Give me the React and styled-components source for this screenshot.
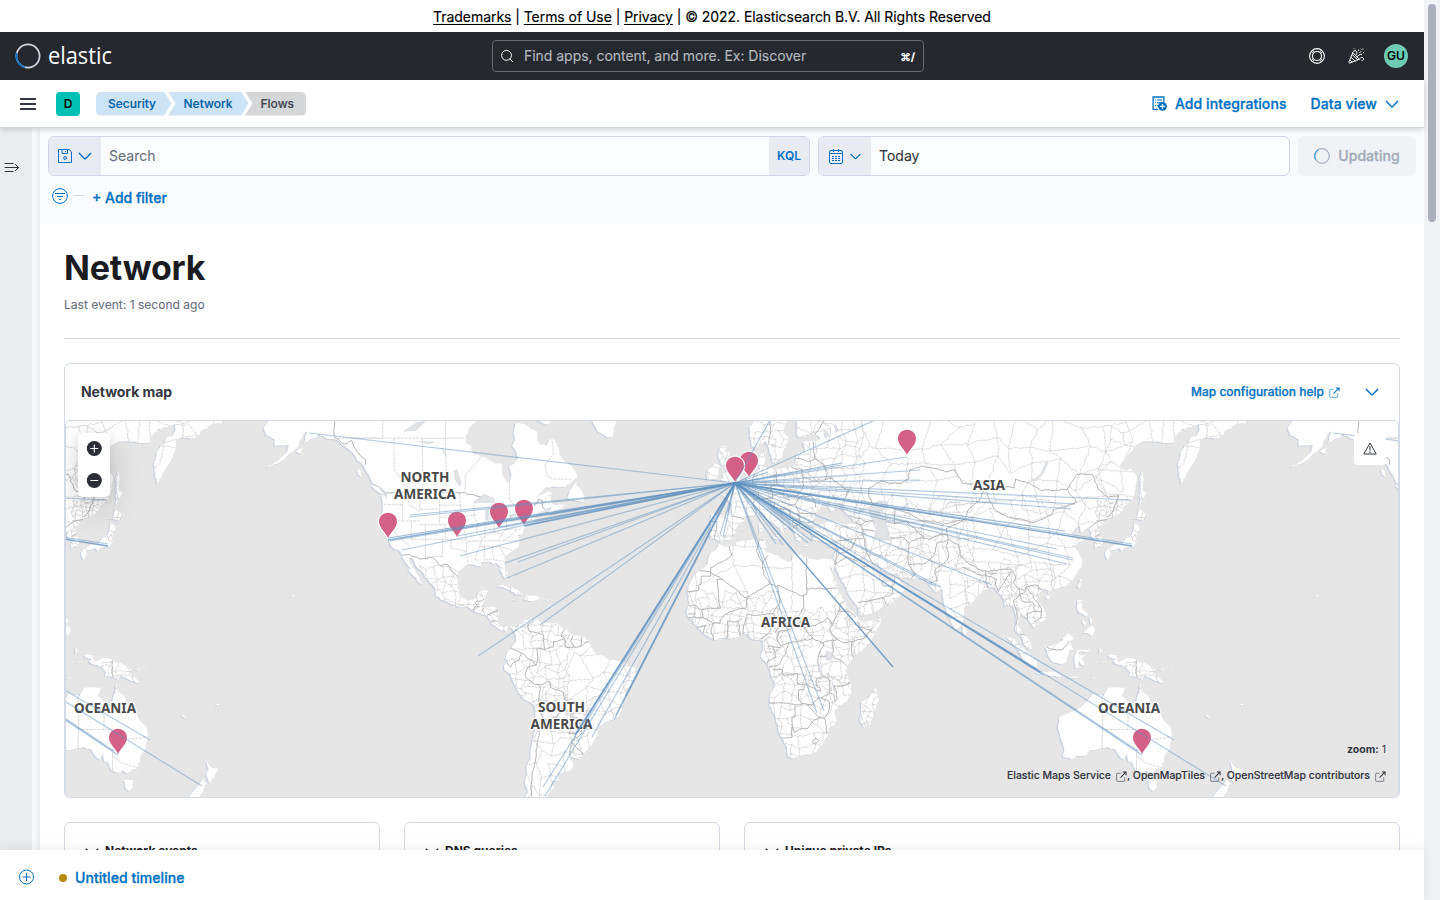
import React from 'react';
import styled, { createGlobalStyle } from 'styled-components';

const Global = createGlobalStyle`
  *, *::before, *::after { box-sizing: border-box; }
  html, body { margin: 0; padding: 0; overflow: hidden; }
  body {
    font-family: Inter, "Liberation Sans", sans-serif;
    font-size: 14px;
    line-height: 20px;
    color: #343741;
    background: #fff;
  }
  a { color: inherit; }
  svg { display: block; flex: none; }
`;

/* ---------- map geometry ---------- */

const WORLD = 1024;
const ORIGIN = { x: 669, y: 232 };
const px = (lon) => ORIGIN.x + (lon * WORLD) / 360;
const py = (lat) =>
  ORIGIN.y - (WORLD / (2 * Math.PI)) * Math.log(Math.tan(Math.PI / 4 + (lat * Math.PI) / 360));

const parse = (s) =>
  s.trim().split(/[\s;]+/).map((p) => {
    const [lon, lat] = p.split(',').map(Number);
    return [px(lon), py(lat)];
  });

const seeded = (seed) => () => {
  seed = (seed * 16807) % 2147483647;
  return seed / 2147483647 - 0.5;
};

/* Breaks long straight runs into short uneven steps, as real coastlines have. */
const rough = (pts, amount, rnd) => {
  const out = [pts[0]];
  for (let i = 1; i < pts.length; i++) {
    const [ax, ay] = pts[i - 1];
    const [bx, by] = pts[i];
    const len = Math.hypot(bx - ax, by - ay);
    const n = Math.min(12, Math.floor(len / 2.6));
    for (let k = 1; k < n; k++) {
      out.push([ax + ((bx - ax) * k) / n + rnd() * amount, ay + ((by - ay) * k) / n + rnd() * amount]);
    }
    out.push(pts[i]);
  }
  return out;
};
const toPath = (pts, close) =>
  'M' + pts.map(([x, y]) => `${x.toFixed(1)} ${y.toFixed(1)}`).join('L') + (close ? 'Z' : '');

const LAND = [
  // North America
  `-161,66 -166,64.5 -164,63 -166,61.7 -165,60.5 -162,59.8 -161.9,58.6 -158.5,58.8 -157,58.8 -157.6,57.5 -160.5,56 -163,55
  -165,54.5 -162.5,55 -160,55.6 -158,56.4 -156,57.4 -154.2,58.2 -153.5,59.2 -151.8,60.8 -150.5,61.2 -151.7,59.2 -149.5,59.8
  -148,60 -146.5,60.8 -144,60 -140,59.7 -137.8,58.7 -136.5,58.2 -134,57 -133,55.8 -131,55 -130.2,54 -128.5,52.5 -127.5,51
  -125,50.3 -123.3,49.2 -122.5,48.5 -122.5,47.2 -123.2,48.2 -124.7,48.4 -124,46.3 -124.1,44 -124.5,42.8 -124.2,41 -123.8,39.5
  -122.5,37.7 -121.8,36.6 -120.6,34.6 -118.5,34 -117.2,32.6 -116.5,31 -115.8,30 -114.2,28.5 -115,27.8 -113.8,26.7 -112.2,25.5
  -112,24.6 -110.2,23 -109.5,23.2 -110.5,24.5 -111.3,26 -112.8,28 -113.8,29.5 -114.7,31.2 -114.7,31.8 -113.2,31.2 -112.2,29
  -110.8,27.8 -109.4,26.6 -109.2,25.7 -107.9,24.7 -106.6,23.3 -105.5,22 -105.4,20.6 -105.2,19.6 -103.5,18.3 -101.9,17.9
  -99.8,16.8 -97.5,15.9 -96,15.7 -94.6,16.2 -93.4,15.5 -92.2,14.5 -90.5,13.9 -88.5,13.2 -87.5,13 -86.5,11.8 -85.7,11
  -85.8,10.1 -84.7,9.6 -83.6,8.8 -82.9,8.2 -81.5,7.7 -80.4,7.3 -80,8 -79.5,9 -78.3,8.3 -77.7,7.2 -76.9,8.2 -77.3,8.8
  -79.5,9.6 -81.5,8.9 -82.8,9.6 -83.7,11 -83.5,12.5 -83.2,14.9 -84.5,15.9 -86.5,15.8 -88.2,15.7 -88.3,17.5 -87.6,19.5
  -86.9,21.4 -88.5,21.5 -90.3,21 -90.8,19.3 -92,18.6 -94.4,18.2 -95.8,18.8 -97.2,20.5 -97.8,22.4 -97.3,25.9 -97.2,27.7
  -95.4,28.9 -94,29.7 -92,29.6 -90.2,29.1 -89.2,29.2 -89.6,30.2 -88,30.4 -86,30.4 -85.2,29.7 -84,30.1 -82.8,29 -82.6,27.6
  -81.8,26.1 -81,25.2 -80.2,25.6 -80.1,27 -81.3,30 -81.2,31.7 -79.2,33.2 -77.9,34 -76,35 -75.8,36.5 -76.4,38.3 -75.3,38.2
  -74.6,39.2 -74,40.5 -72,41.2 -70.2,41.8 -70.8,43 -69,44 -67,44.8 -66,45.2 -64.6,45.5 -66.1,43.8 -65.3,43.6 -63.5,44.6
  -61,45.3 -60.2,46 -61.4,46.2 -64,46.1 -64.9,47 -65,48 -66.5,48.2 -64.3,48.8 -65.5,49.2 -69,48.3 -71,46.9 -69,48.6
  -66.5,50.2 -62,50.2 -60,50.2 -57.5,51.4 -55.8,52.3 -56,53.5 -57.5,54.6 -60,55.5 -61.8,57 -62.5,58.5 -64,60 -65.5,59.8
  -66.3,58.7 -68.5,58.8 -69.7,59.8 -69.6,61 -72,61.6 -74,62.3 -77.5,62.5 -78,60.8 -77.5,60 -78.5,58.6 -77,57.5 -76.5,56.5
  -78,55.2 -79.5,54.7 -78.8,53 -79.3,51.5 -80.5,51.2 -82,53 -82.2,55.1 -85,55.3 -88,56.5 -92,57 -93,58.7 -94.7,59
  -94.8,60.5 -93.5,61.8 -91,63 -88,64.5 -86,66 -86,72 -120,72 -161,70`,
  `-59.2,47.7 -56,47 -53.5,46.7 -53,47.8 -54,49.4 -56,50.6 -55.6,51.5 -57.2,50.6 -58.5,48.8`,
  `-128.3,50.7 -125.3,50.2 -123.5,48.5 -125.2,48.8`, `-133,54 -131.7,53.8 -131.3,52.4 -132.6,53`,
  `-154.5,57.6 -152.2,58.2 -152.8,57.2`, `-73,65 -72,63.4 -66,62.3 -65,62.6 -67,63.6 -66,65`,
  `-84.9,21.9 -83,23 -80.5,23.1 -77.5,21.9 -74.4,20.3 -77.5,19.9 -77.5,20.6 -79.5,21.6 -82,22.6`,
  `-74.4,18.5 -73,19.8 -70,19.7 -68.5,18.6 -71,17.8`, `-78.3,18.3 -76.3,18.1 -77.5,17.8`, `-67.2,18.4 -65.7,18.4 -65.9,18`,
  `-52,66 -51,64 -50,62.5 -48,61 -45,60.1 -43.2,60.2 -42.5,62 -41,64 -38,66`,
  `-156,19.2 -155,19.6 -156,20.1`,
  // South America
  `-77.3,8.6 -76.5,8.8 -75.6,10.6 -74.8,11.1 -73,11.5 -71.4,12.4 -71.9,11.3 -71.5,10 -70.8,11 -70,11.9 -69.5,11.5 -68.2,10.6
  -66,10.5 -64.5,10.2 -62,10.7 -61.9,9.8 -60.8,8.6 -59,8.2 -57.3,6 -55,6 -53,5.5 -51.6,4.3 -50.5,2 -50,0.8 -48.5,-0.6 -47,-0.8
  -44.5,-2.5 -41.5,-2.9 -39.5,-3 -37,-4.8 -35.3,-5.2 -34.8,-7.5 -35.3,-9.5 -37,-11.5 -38.5,-13 -39,-15 -39.2,-17.8 -40,-20
  -41,-22 -43,-23 -45,-23.5 -46.7,-24.3 -48.5,-25.8 -48.6,-28 -50,-30 -52,-32.5 -53.5,-34 -55,-35 -57,-34.5 -58.4,-34
  -57.2,-35.8 -56.8,-37 -58,-38.2 -61,-39 -62.3,-39 -62,-40.8 -64.5,-41 -65,-42 -63.7,-42.5 -65.2,-44 -66.5,-45 -67.5,-46.5
  -66,-50 -74,-50 -75,-46.8 -73,-44 -74,-41.8 -73.4,-39.5 -73.5,-37 -72,-34 -71.5,-30 -70.5,-26 -70.2,-20 -71.3,-17.7
  -75,-15.5 -76.3,-13.8 -77.2,-12 -78.7,-8.5 -79.8,-7 -81.2,-6 -81.3,-4.3 -80.3,-3.4 -80,-2.5 -81,-2.2 -80.5,-0.8 -80,0.6
  -78.8,1.6 -77.2,3.8 -77.4,6 -77.8,7.2`,
  // Africa
  `-5.9,35.8 -2.2,35.2 1,36.4 5,36.8 9.8,37.3 11,36.9 10.4,36 11,34.8 10.1,34 11.2,33.2 13,32.8 15.2,32.3 16,31.3 18.5,30.4
  20,31 20,32.3 21.6,32.9 23.2,32.4 25,31.6 28.5,31 31,31.5 32.3,31.2 32.6,29.9 33.5,28 35.5,24 35.6,22 37.2,20.8 37.4,18.7
  38.6,18 39.6,15.5 41.2,14.5 43,12.5 43.2,11.5 44.8,10.5 47,11.2 51.2,11.9 51,10.4 49,7 47.5,4 45,1.5 42.5,-1 41,-2.2
  39.6,-4.4 38.8,-6.3 39.4,-8 40.5,-10.6 40.7,-14.5 39,-17 36,-19 34.8,-20 35.4,-22.3 35.3,-24 32.8,-25.6 32.6,-28 31,-29.8
  28.5,-32.7 26,-33.8 22.5,-34 20,-34.8 18.4,-34.1 18.2,-31.9 16.5,-28.7 15.1,-26.7 14.4,-22.8 12.8,-19.3 11.8,-17.5
  12.4,-14 13.6,-12.2 13.8,-10.6 13,-9 12.2,-6 11.3,-4 9,-1.4 9.4,0.5 9.7,2.5 9.6,4 8.6,4.6 7,4.4 5.5,5 4.4,6.4 1.5,6.2
  -2,4.8 -4.5,5.2 -7.6,4.4 -9.5,5.6 -11.5,6.9 -13.2,8.6 -14.8,10.9 -16.7,12.4 -17.4,14.7 -16.4,16.3 -16.3,19.5 -17,21
  -16,23.8 -14.8,26 -13,27.7 -11.5,28.4 -9.8,29.8 -9.6,31.4 -8.4,33.3 -6.8,34.2`,
  `49.4,-12.1 50.4,-15.7 49.5,-18 47.5,-24.5 45.2,-25.5 43.6,-23.2 44.3,-20 44,-17 46.5,-15.6 48.2,-13.8`,
  // Eurasia
  `10,64.5 7,63 5,62 5,60.5 5.6,58.8 7.2,58 9,59 10.5,59.5 11.2,58.8 12,57.4 12.8,56 13,55.4 14.3,55.5 15,56.1 16.4,56.3
  16.6,57.6 18,58.9 18.9,59.8 17.3,60.7 17.2,61.8 18,62.8 20,63.6 22,65.8 25,65.2 23,64 21.4,63 21.4,61 22.5,60.1 25,60.2
  28.5,60.5 30,59.9 28,59.5 25,59.5 23.5,59.1 24.3,58.3 24.2,57.3 22.5,57.6 21.2,56.8 21,55.3 19.8,54.5 18.5,54.7 16.5,54.4
  14.2,53.9 12.5,54.4 11,54 10.8,54.4 9.9,55 10.5,56.4 10.5,57.6 8.3,57 8.2,55.5 8.8,54 7,53.5 4.8,53 3.8,51.6 1.8,50.9
  0.2,49.6 -1.6,49.6 -1.5,48.7 -4.6,48.5 -2.6,47.3 -1.2,46 -1.4,43.6 -4,43.4 -8.5,43.7 -9,42 -8.8,40 -9.4,38.8 -8.8,37.1
  -6.7,37 -5.6,36.1 -4,36.7 -2.2,36.8 -0.6,37.8 0.2,38.8 -0.4,39.6 1,41 3.2,42 3.1,43.1 5,43.4 7,43.5 8.8,44.4 10.3,43.6
  11.5,42.3 13.6,41.2 15.6,40 16,38.3 15.8,38 17,38.9 16.7,40.3 18.4,40 18,40.8 16,41.8 14,42.8 13.3,43.8 12.4,44.6
  12.5,45.4 13.7,45.6 14,44.9 15.3,44.2 17.5,42.9 19.4,41.8 19.4,40.4 20.8,38.8 21.4,36.9 22.8,36.5 23.2,37.5 24,37.8
  22.8,39.2 22.8,40.4 24.3,40.3 26,40.9 27.5,41 29,41.2 28,42 27.8,43 28.7,44.2 30,45.8 31.5,46.6 33.5,46.1 32.6,45.4
  33.7,44.4 35.3,45 36.5,45.3 35,46.2 38,47 39.2,47.1 37.7,46.4 37.5,45 39.6,43.5 41.5,42.2 41.3,41.4 38,41 35,42 32.5,41.8
  30.5,41.1 29,41 27.5,40.4 26.2,40.1 26.8,38.8 27.3,37 28.5,36.7 30.5,36.4 32.5,36 34.5,36.7 36.1,36.6 35.8,35 35,33
  34.2,31.3 32.3,31.2 32.6,29.9 34.2,27.8 34.9,29.4 36.5,26 39,22 39.2,21 41,18.5 42.7,16.5 43.3,13 45,12.9 49,14.2
  52.2,15.7 55.2,17.5 57.8,19.5 59.8,22.5 58.5,23.7 56.5,26 56,24.7 54.2,24.2 51.6,24.2 51.4,26 50.7,25 50.1,26.7
  48.5,28.8 48,30 50.1,30.2 51.5,27.8 54.5,26.6 57,27 57.2,25.8 61.5,25.2 66.5,25.2 67.5,24 69,22.3 70.5,20.8 72.6,22
  72.8,19.2 73.5,16 74.8,13 76.2,10 77.5,8.1 79,9.3 79.9,10.4 80.2,13.5 80.2,15.5 82.3,16.6 85,19.5 87,21.2 88.5,21.8
  91,22.4 92.3,20.8 94.3,18.5 94.5,16 96.5,16.5 97.6,16.2 98.5,13 98.7,10 98.3,8 100.3,6.3 101.2,3 103.5,1.3 104.2,1.5
  103.4,4.5 102,6.2 100.5,7.3 99.3,9.3 99.8,11.5 100.2,13.4 101.5,12.7 102.8,11.8 103.6,10.6 105,8.7 106.8,10.4 109.2,11.8
  109.2,13.5 108.5,15.5 106.5,17.8 105.7,19 107,20.8 108.5,21.6 110,21.4 110,20.4 111,21.5 113.8,22.2 116.5,23 118.5,24.6
  119.7,26.3 121.5,28.5 121.9,30.8 120.5,33.5 119.3,35 122.4,37 120.8,37.8 119,37.3 118,38.8 121,40.8 121.4,39 124,40
  125.2,38.8 125,37.8 126.7,37 126.5,34.5 129,35.3 129.4,37 127.5,39.5 129.7,41.2 131,42.7 133,42.8 135.5,44.3 138,46.5
  140.3,48.5 140.6,50.5 141.2,52.5 139,54.2 137.2,53.8 135.2,54.8 138,57 141,58.8 143,59.3 148,59.4 151,59.2 155,59.3
  154.3,60 157,61.6 160,61.8 163,62.5 163.2,61.5 162,60.4 160,60 157,57.8 155.6,55.5 156,52.5 156.7,51 158.5,53 160,54.5
  162,56.2 163.2,58 163.5,59.8 166,60 170,60 173,61.5 177,62.5 179.5,62.5 179.9,65 180,72 60,75 20,72`,
  `-5.6,50.1 -3.5,50.3 -1,50.7 1.3,51.2 1.7,52.7 0.2,53.2 -1.2,54.6 -2,56 -3,56 -1.9,57.5 -4,57.7 -3.1,58.6 -5,58.6 -6,57
  -5.5,56 -4.8,55 -3.2,54.9 -3,53.5 -4.5,53.2 -4.3,52.3 -5.2,51.8 -3,51.4`,
  `-10,51.6 -6.5,52.2 -6,53.8 -5.6,54.6 -7.3,55.3 -8.5,54.4 -10,53.8`,
  `12.5,38 15.5,38.2 15.1,36.7`, `8.3,41 9.6,41 9.5,39.2 8.5,39`, `8.7,42.5 9.4,42.9 9.4,41.5`, `23.6,35.5 26.2,35.2 24.8,35`,
  `32.4,35 34.4,35.6 33.5,34.7`, `2.5,39.7 3.4,39.7 3,39.3`, `79.9,9.5 81.8,7.5 80.5,6 79.8,7.5`,
  `95.3,5.6 97.5,5.2 100.3,2.5 103.5,-0.8 106,-3 105.8,-5.8 102.5,-4 100.3,-1 98.7,1.8`,
  `105.3,-6.7 108.5,-6.7 111,-6.5 114.5,-7.8 114.4,-8.6 110,-8 106.5,-7.4`,
  `109,1.8 111.3,2.5 113.2,3.3 115.2,5.3 116.8,6.9 119,5.2 117.7,4 118.8,1 117.5,0.8 116.2,-3.5 114.5,-4 111.7,-3.3 110,-1.2`,
  `119.5,-0.5 120,0.8 123,1 125,1.5 124,0.4 120.3,0.3 121,-1 123.3,-0.9 121.8,-2 122.8,-4.4 121.5,-4.2 120.9,-2.8 120.3,-5.5 119.5,-5.3 119.2,-3`,
  `116,-8.4 119,-8.5 122.8,-8.3 119,-8.9`, `123.6,-10.2 127,-8.4 125,-9.4`, `128,2.1 128.8,0.8 127.8,-0.6`, `128,-3.2 130.8,-3.2 129,-3.5`,
  `131,-0.8 134,-0.9 135,-3.3 138,-1.7 141,-2.6 145,-4.3 147.8,-6 147.2,-7 150.7,-10.4 147.5,-9.8 144,-7.8 142.8,-9.2 139.5,-8.2
  138.2,-8.3 138.8,-6.8 137,-5 133.5,-3.8 132.8,-2.9 133.9,-2.3 131.5,-1.6`,
  `148.6,-5.8 151,-5.6 152.3,-4.4 151.5,-5.6 150,-6.3`, `154.8,-5.6 155.8,-6.8 155,-6.2`, `164.1,-20.2 167,-22.2 166.2,-22.2`, `177.3,-17.6 178.5,-17.8 178,-18.2`,
  `120.2,18.2 122.1,18.4 121.6,15.5 123.8,13.6 123.8,12.8 120.8,14 120,16`, `124.3,12.5 125.6,11 124.8,10.1`, `122,11.7 123.3,10.6 122.8,9.3 122,10.5`,
  `122.2,7 123.8,8.4 125.5,9.6 126.4,7.6 125.5,5.8 124,6.8`, `117.2,8.4 119.3,10.8 119,10`,
  `120.1,23 121.2,25.2 121.8,25 120.8,22`, `108.7,19.3 110.8,20.1 110,18.4`,
  `130,33.4 131,34.3 133.5,35.5 136,35.8 137,37.3 138.8,37.8 140,39.5 140.2,41.2 141.5,41.3 142,39.6 141,38 140.8,35.8 138.8,34.8
  137,34.7 135.8,33.5 134.8,34.6 132,33.9 131.8,32.4 130.7,31.1 130,32.4`,
  `140,42.6 141.2,43.3 141.8,45.4 143.5,44.2 145.3,43.5 143.3,42 141,42.5`,
  `142,46 142.2,49 142,52 142.8,54.3 143.4,52.5 143.2,49.3 144.5,49 143,46.8`,
  // Oceania
  `113.7,-22.5 114.2,-21.8 117,-20.7 119.5,-20 122.2,-18 124,-16.4 126,-14.2 128,-14.8 129.5,-15 130.8,-12.4 132.6,-12 135.2,-12.2
  137,-12.1 135.8,-14.8 139.2,-17.4 140.9,-17.4 141.6,-14 142.5,-10.8 143.5,-14 145.3,-15 146.2,-18.8 149,-20.5 150.8,-23.4
  153.2,-25.5 153.5,-28.5 152.5,-32 151,-34 150,-37.3 147.5,-38.2 146.3,-39 144.5,-38.2 143.5,-38.8 140.5,-38 139.6,-36
  138,-35.6 137.9,-33 136.5,-35 135.2,-34.5 133.6,-32.3 131,-31.5 128.5,-31.8 126,-32.3 124,-33 123.3,-33.9 120,-34
  118,-35 115.1,-34.3 115.7,-32 114.1,-27.8 113.4,-25.8`,
  `144.8,-40.8 148.3,-40.9 148,-42.8 146.8,-43.6 145.4,-42.5`,
  `172.8,-34.5 174.6,-36.2 175.6,-37.2 178.3,-37.7 177,-39.6 175.5,-41.5 174.8,-41.2 173.8,-39.4 174.8,-38 174.3,-36.4`,
  `172.7,-40.6 174.2,-41.6 172.8,-43.7 170.7,-46 168.8,-46.8 166.6,-46 169.5,-43.6 171.5,-42`,
];

const LAKES = [
  `47,45 49,46.5 51,47 53,46.8 53,45.3 51,44.5 50.3,44.3 52.8,42.5 53,41 53.8,39.5 53.8,37 51.5,36.7 49,37.6 49,39 50,40.5 48.5,42 47.5,43.3`,
  `103.8,51.5 106,51.7 108,53 109.8,55.3 109.3,55.7 107.5,53.2 105,51.9`, `58.5,44.5 60,46.5 61,46.4 59.2,45`,
  `73.8,45.3 75,46.5 79,46.6 75,46.8`, `31.8,0.4 34.2,0.2 33.5,-2.6 31.8,-2.3`, `29.2,-3.5 30.8,-8.6 29.3,-6`, `34,-10 35,-14 34.4,-12`,
  `-92,46.7 -88.4,48.6 -85,47.6 -84.7,46.5 -87.5,46.6 -90,46.7`, `-87.5,45 -86.8,41.8 -87.8,42.5 -87.8,44.5 -85,45.9 -86,44.2 -86.2,42.2`,
  `-84.5,45.9 -81.5,45.9 -80,44.6 -81.7,44.8 -82.5,43 -83.8,43.8`, `-83.3,41.8 -79,42.8 -80,42.1`, `-79.6,43.3 -76.3,44.1 -77,43.3`,
  `-99,53.8 -97.8,53.9 -96.4,51 -97,50.5 -98.5,52`, `-116.5,61.2 -112,62.6 -109.2,62.8 -112.5,61.3`, `-111,59.4 -106,59.3 -108,59`,
  `-103,58.2 -101.6,56.6 -102.3,57`, `31,61.6 33,60.6 31.5,60`, `35,62.5 36.3,61.2 35.3,61`,
  `13,58.9 14,58.6 12.8,58.4`,
];

const BORDERS = [
  `-122.8,49 -114,49 -104,49 -95.2,49 -94.6,48.7 -89.5,48 -88.4,48.3 -84.8,46.8 -82.5,45.3 -82.5,43 -83.1,42 -79,42.8 -79,43.4 -76.5,44.1 -74.8,45 -71.5,45 -70.3,46.2 -69.2,47.4 -67.8,47 -67.8,45.7 -67,44.9`,
  `-141,70 -141,60.3`, `-141,60.3 -137.5,58.9 -135,59.6 -133,57.5 -130,56 -130,55`,
  `-117.1,32.5 -114.7,32.7 -111,31.3 -108.2,31.3 -108.2,31.8 -106.5,31.8 -104.9,30.6 -103.3,29 -102.5,29.8 -101,29.5 -99.5,27.5 -97.2,25.9`,
  `-92.2,14.6 -91.7,16 -90.4,16 -91.4,17.2 -91,17.8 -89.2,17.9 -88.3,18.5`, `-89.3,14.4 -88.3,15.7`, `-87.4,13 -85,14.3 -83.2,15`, `-85.7,11.1 -83.7,10.9`,
  `-51.6,4 -54.5,2.3 -56,1.9 -59.8,2 -60,5 -62.8,4 -64,4 -64,2 -67,1.2 -69.8,1.7 -69.5,-1 -70,-4.3 -73,-5 -74,-7.5 -72.7,-9.5 -70.6,-11 -68.5,-11.1 -65.3,-10 -65,-12 -60.5,-13.8 -60,-16.3 -58.2,-17 -57.8,-20 -58,-22 -55.7,-22.3 -54.5,-24.5 -54.6,-25.6 -53.8,-27 -57.6,-30 -53.5,-33.7`,
  `-69,-17.5 -68.2,-21.5 -67,-23 -68.5,-25 -69.7,-30 -70,-34 -71,-38 -71.8,-42 -71.5,-50`, `-67,-23 -62.8,-22 -61,-19.5 -58.2,-20`,
  `-62.6,-22.2 -58,-25 -58.6,-27.3 -56,-27.3 -54.6,-25.6`, `-57.6,-30 -58.3,-33.9`, `-70.3,-18.3 -69,-17.5 -69,-15 -68.5,-12.5 -69.5,-11`,
  `-70,-4.3 -72,-2.4 -75.2,-0.1 -78.8,1.5`, `-75.2,-0.1 -76,-2.5 -78.3,-3.5 -79,-5 -80.3,-3.5`, `-71.4,11.8 -73,9.2 -72.3,7.4 -70,7 -67.5,6.2 -67.3,2.5 -67,1.2`,
  `-60,5 -61.3,6 -60,8.3`, `-57.3,5.9 -58,4 -56.5,1.9`, `-54,5.7 -54.5,2.3`,
  `-2.2,35 -1.3,32.5 -3.5,31 -8.7,28.7 -8.7,27.3 -12.9,27.7`, `-8.7,27.3 -8.7,26 -12,26 -12,23.4 -13,23 -13,21.3 -17,21`,
  `-8.7,27.3 -4.8,25 1.2,21.1 3.2,19 4.2,19.2 12,23.5`, `-4.8,25 -6.5,25 -5.5,16.5 -5.3,15.5 -9.5,15.4 -12,14.8`,
  `12,23.5 9.9,26.5 9.5,30.2 11.5,32.4`, `9.5,30.2 7.5,33.5 8.4,36.8`, `12,23.5 14.2,22.6 15,23 24,19.5 24,20 25,20 25,31.5`, `25,22 36.9,22`,
  `24,19.5 24,15.7 22,12.7 22.9,11`, `15,23 15.5,17 13.5,14.3`, `4.2,19.2 4,16.5 3.5,15.3 0.3,15 -3,13.7 -5.3,11.5 -5.5,10.4 -8,10.2 -8.5,7.5 -7.6,4.5`,
  `3.6,11.7 4.1,13.5 7,13 10,13.3 13.5,13.7 14.2,12.5 15.3,10 14,7`, `14.2,12.5 13.2,10 11.5,6.6 8.8,4.8`, `2.7,6.4 2.8,9 3.6,11.7`, `1.6,6.2 0.9,10.9`,
  `-3,5.1 -2.7,9.5 -2.8,11 1,11 2.4,12`, `-16.4,16.2 -14.5,16.6 -12,14.8 -11.4,12.4 -16.7,12.4`, `-16.6,13.6 -13.9,13.5`, `-13.2,9 -10.5,9.5 -11.4,6.9`, `-11.4,12.4 -8.5,11 -8,10.2`,
  `15.3,7.5 18.5,8 22.9,11 24,8.7 27.4,5 22.5,4.1 18.6,3.5 16,2.3 14.5,5 15.3,7.5`, `24,8.7 28,9.4 32.5,12 34,9.6 33,7.8 35.9,4.7`,
  `34,9.6 36.2,14.2 37,17 38.6,18`, `36.4,14.4 40,14.5 42.4,12.5`, `43,11 44,9 47,8 48,8 45,5 42,4.1`, `35.9,4.7 38,3.6 41,3.9 42,4.1`, `41,3.9 41,-0.8 41.6,-1.7`,
  `34,4.2 34.5,1 34,-1 29.6,-1.3`, `30.8,3.5 35.9,4.7`, `34,-1 37.6,-3.1 39.2,-4.7`, `13,-5.9 16.6,-6 17,-8 21.8,-7.3 21.9,-11 24,-11 24,-13 22,-13 22,-16.2 23.3,-17.6 25.3,-17.8`,
  `18.6,3.5 17.8,0 16.2,-2.5 15,-4.5 13,-4.6 12,-5`, `27.4,5 30.8,3.5 31,2.3 29.7,0.5 29,-2.8 29.4,-6 30.7,-8.3 28.6,-9 28.6,-11.8 29.8,-12.2 29.8,-13.4 27.5,-12.2 25.3,-11.3 24,-11`,
  `25.3,-17.8 27,-18 29,-15.7 30.4,-15.6 33.2,-14 33,-9.5 30.7,-8.3`, `11.8,-17.3 14,-17.4 18.5,-17.4 21.4,-18 24,-17.5`, `21,-18.3 21,-22 20,-22 20,-28.4 17.4,-28.7 16.5,-28.6`,
  `20,-24.8 20.8,-26.9 22.5,-26 25.5,-25.6 27,-23.7 29.4,-22.2 27.7,-20.5 25.3,-17.8`, `29.4,-22.2 31.3,-22.4 32.8,-20 33,-17 30.4,-15.6`, `31.3,-22.4 32,-25 32,-27 32.8,-27`,
  `27,-29.7 28.3,-28.7 29.4,-29.5 28,-30.6 27,-29.7`, `34.6,-11.5 37.5,-11.7 40.4,-10.5`, `33.2,-14 34.5,-14.5 35,-17 35.8,-16 35.5,-13.5 34.6,-11.5`, `11.3,2.2 13.2,2.2 14.4,-1.5 11.5,-2.8 11,-4`, `13.2,2.2 16,1.8`,
  `-8.8,42 -6.5,41.8 -7,39 -7.3,37.2`, `-1.6,43.3 3.1,42.4`, `2.5,51 6,49.5 8.2,49 7.5,47.6 6,46.3 7,45 7.5,43.8`, `7,53.3 6,51.8 6,50 `, `7.5,47.6 9.6,47.5 13,47.6 13,48.5 12.2,50.3 14.8,50.9 14.2,53.8`,
  `14.8,50.9 18.8,49.6 22.6,49.1 24,50.7 23.6,52.6 23.5,54 19.8,54.4`, `13,48.5 17,48.8 17,47.9 22,48.3 22.6,49.1`, `10.5,46.8 13.7,46.5 13.6,45.6`, `16.1,46.8 18.8,45.9 21,46.2 22.8,47.9`,
  `22.8,44 28.6,43.8`, `21,46.2 22.5,44.2 22.5,42 26,41.5 28,42`, `22.9,48 26.7,48.2 28.2,46.5 28.2,45.4`, `21,56.2 26.5,55.7 28,56.2 27.5,57.5 27.5,59.3`, `23.6,52.6 27,51.6 31.5,51.8 34,52.2 38,50 40,49.6 38.3,47.6`, `28,56.2 31,55 32.5,53.4 31.5,51.8`,
  `28,60.6 31.3,63`, `12.2,64 12.3,61 11.5,59`, `20,42 22.4,42.2 23,41.3 20.8,40.8 20,39.7`, `16.8,42.5 15.8,45.2 19,44.9 19.2,43.4`,
  `48.5,46 47,48 47,50 51,51.5 55,51 58.5,51 61,52 61.5,54 66,54.7 71,54.2 74,53.5 77,54 80,51 83.5,51 87.3,49.2`,
  `87.8,49.2 92,50.7 98,50 98.5,52 102.3,51.3 107,49.6 112,49.4 116.7,49.8 119.8,46.7 115.7,45.5 111.8,45 111,43.5 105,41.6 100,42.6 96,42.8 91,45 87.8,49.2`,
  `116.7,49.8 120,53 125.5,53 127.5,49.8 131,47.8 134.8,48.4 133,45 131,43`, `87.3,49.2 85.5,47 82.5,45.3 80.2,42.2 74,39.8 74.8,37`,
  `74.8,37 78.5,35.5 79,32.5 81.5,30.3 86,28 89,27.4 92,27.8 97,28.2 98.5,25.5 97.7,24 99.5,22 101.7,21.2 102.2,22.5 105.5,23.2 108,21.6`,
  `68.2,23.8 71,24.5 70,27.8 74.5,31 75,33 74,35 74.8,37`, `61.6,25.2 63.2,27 61,29.5 66.3,29.9 69.5,32 71,36 74.8,37`, `61,29.5 60.7,33 61.2,36 59,37.5 54,37.3`,
  `48.5,30 46,33 45.5,36 44.5,39.8 48.5,39.4`, `61.2,36 65,37.5 68,37 71,38 74,38.5`, `52.8,41.7 56,41.3 60,42 66.5,37.4`, `56,41.3 56,45 62,43.5 66,42 70,42 73,41 80,42.2`,
  `36.1,36.7 42.4,37.2 44.7,37.2`, `44.5,39.8 43.5,41.1 41.5,41.5`, `43.5,41.1 46.5,41.8 48.5,42`, `40,43.5 44,42.7 46.5,41.8`, `35,29.5 37.5,31 39,32 42,31 44.7,29.3 47,29 48.4,28.5`,
  `42.4,37.2 41,34.5 38.8,33.4 36,32.7`, `43,17.4 48.2,18.2 52,19 53,16.7`, `52,19 55,20 55.2,22.7 52,22.9 51.3,24.3`, `55.2,22.7 56,24.8`, `34.3,31.3 35,29.5 35.6,33 36,34.5`,
  `80,28.8 85,26.6 88,26.5 88,27.9`, `89,22 88,24 88,26.3 92,25 91.3,23.3 92.4,21`, `89,26.8 92,26.9`, `92.4,21 94.3,24 97,27.5`, `98.7,10 99.3,12 98.5,15.5 97.7,18 100,20.3 101,17.7 104.5,17.5 105.5,14.4 102.5,13.8 102.8,11.8`,
  `102.2,22.5 104.5,20 105,18.7 107.5,15.5 107.5,12.3 105,10.9`, `105.5,14.4 107.5,14.4`, `99.5,22 100,20.3 102,21`, `100.2,6.5 102,6`, `124.2,40 127,41.6 129,42.2 130.6,42.4`, `126.6,37.8 128.4,38.5`,
  `109.5,2 112,1.2 115,1 117.5,4.2`, `114,4.4 115.2,4.6`, `141,-2.7 141,-9.1`,
];

const STATES = [
  `-135,60 -120,60 -95,60`, `-120,60 -120,54 -114,49`, `-110,60 -110,49`, `-102,60 -101.4,49`, `-89,56.8 -95,52.8 -95,49`, `-79.5,51.5 -79.5,47.3 -77,45.5 -74.5,45.2`, `-102,60 -102,70`, `-141,60 -124,60 -124,63 -132,66`,
  `-64.5,60.2 -64,57 -67,55 -66,52.5 -64,52 -57.5,52`, `-68,45.5 -66.5,47.9`, `-123.5,46.2 -117,46`, `-124,42 -111,42`, `-120,42 -120,39 -114.6,35`, `-117,49 -117,42`, `-111,49 -111,45`, `-116,49 -114.5,46 -111,44.5`,
  `-111,45 -104,45`, `-104,49 -104,41`, `-111,41 -102,41`, `-109,41 -109,31.5`, `-114,42 -114,37`, `-114,37 -94.6,37`, `-103,37 -103,32`, `-103,32 -106.5,32`, `-102,41 -102,37`, `-104,46 -96.5,46`, `-104,43 -98,43 -91,43.5`, `-97,49 -96.5,43 -94.6,37`,
  `-102,40 -95,40 -91.5,40.5`, `-94.5,36.5 -94.5,33.5 -94,30`, `-100,36.5 -100,34.5 -94.5,33.5`, `-91.5,47 -92,43 -90.5,41.5 -91,39 -89,37 -91,33 -91.5,31 -89.6,31`, `-88,42 -88,38 -89,37`, `-94,36.5 -90,36.5 -81.7,36.6 -76,36.5`, `-90,35 -83,35 -78.5,34`,
  `-88.2,35 -88.4,30.5`, `-85.5,35 -85,31 -81.5,30.7`, `-88,31 -85,31`, `-85,39 -82,38.5 -83.5,36.6`, `-84.8,41.7 -84.8,39.1 -88,37.8`, `-80.5,42 -80.5,40 -82,38.5`, `-80.5,39.7 -75.5,39.8`, `-79,42 -75.3,42 -74,41`, `-73.5,45 -73.3,42 -71,42.5`, `-83,35 -81,32`, `-77,39.5 -79,38 -81.7,36.6`,
  `129,-15 129,-31.7`, `138,-16.6 138,-26`, `129,-26 141,-26`, `141,-26 141,-38`, `141,-29 149,-29 153.3,-28.2`, `141,-34 144,-36 150,-37.5`,
];

/* [x0, y0, x1, y1, cell] */
const PROVINCES = [
  [634, 0, 795, 125, 9], [795, 0, 1040, 78, 22], [1040, 0, 1130, 60, 26], [795, 78, 895, 150, 12], [895, 78, 1040, 180, 17], [865, 150, 945, 220, 12],
  [935, 140, 985, 230, 9], [770, 104, 865, 200, 13], [617, 172, 706, 222, 8], [700, 190, 790, 262, 9], [695, 255, 790, 345, 10], [785, 180, 840, 262, 11],
  [438, 195, 500, 285, 9], [500, 215, 600, 320, 20], [560, 225, 600, 315, 9], [460, 280, 545, 380, 13], [354, 148, 455, 210, 8], [790, 260, 830, 330, 6],
  [1030, 80, 1085, 120, 5], [1060, 240, 1120, 270, 8], [638, 120, 690, 172, 40], [1085, 0, 1160, 60, 30],
];

const rnd = seeded(4711);
const landPath = LAND.map((s) => toPath(rough([...parse(s), parse(s)[0]], 1.5, rnd), true)).join('');
const lakePath = LAKES.map((s) => toPath(parse(s), true)).join('');
const borderPath = BORDERS.map((s) => toPath(rough(parse(s), 1.5, rnd))).join('');
const statePath = STATES.map((s) => toPath(rough(parse(s), 0.5, rnd))).join('');
const provincePath = PROVINCES.map(([x0, y0, x1, y1, c]) => {
  const cols = Math.ceil((x1 - x0) / c);
  const rows = Math.ceil((y1 - y0) / c);
  const g = [];
  for (let r = 0; r <= rows; r++) {
    g.push([]);
    for (let k = 0; k <= cols; k++) g[r].push([x0 + k * c + rnd() * c * 0.95, y0 + r * c + rnd() * c * 0.95]);
  }
  let d = '';
  for (let r = 0; r <= rows; r++)
    for (let k = 0; k <= cols; k++) {
      if (k < cols && rnd() < 0.38) d += toPath(rough([g[r][k], g[r][k + 1]], 2, rnd));
      if (r < rows && rnd() < 0.38) d += toPath(rough([g[r][k], g[r + 1][k]], 2, rnd));
    }
  return d;
}).join('');

const HUB = [735, 483];
/* [x, y, opacity, width] of every flow's far end */
const FLOWS = [
  [309, 433], [410, 515], [409, 517], [388, 540, 0.7, 1.7], [388, 538, 0.6], [390, 541], [402, 550], [460, 556], [457, 536], [499, 527, 0.6], [524, 526, 0.7, 1.5], [524, 524], [549, 515],
  [505, 563], [518, 562], [507, 578], [478, 656], [540, 625],
  [545, 796], [543, 787], [575, 735, 0.7, 1.6], [577, 733], [583, 727], [592, 737], [614, 720], [616, 715, 0.5, 1.5], [626, 696, 0.45, 2],
  [723, 537], [720, 535], [728, 512], [770, 420], [875, 420], [907, 457], [842, 463, 0.6], [841, 465], [920, 470], [920, 480], [800, 480], [790, 500], [810, 495], [768, 472],
  [1131, 500], [1075, 504], [1071, 509], [1065, 531, 0.6], [1132, 546, 0.8, 1.4], [1132, 544], [1073, 558], [1073, 560], [1067, 564], [1057, 549], [992, 585], [941, 587], [935, 586],
  [893, 667, 0.85, 1.4], [817, 713], [824, 711], [776, 544], [783, 545], [808, 543], [812, 541], [800, 530], [795, 533],
  [1040, 672, 0.6, 1.5], [1042, 674], [1037, 669], [1044, 675], [1142, 755, 0.5, 1.5], [1138, 751], [1174, 740], [1226, 786],
];
const PINS = [[388, 538], [457, 537], [499, 528], [524, 525], [749, 477], [735, 482], [907, 455], [1142, 754]];

/* ---------- layout ---------- */

const Screen = styled.div`
  display: grid;
  grid-template-columns: 1fr 16px;
  width: 1440px;
  height: 900px;
  overflow: hidden;
`;
const Page = styled.div`
  display: flex;
  flex-direction: column;
  height: 900px;
  min-width: 0;
`;
const ScrollTrack = styled.div`
  background: #f1f2f5;
  padding: 4px;
`;
const ScrollThumb = styled.div`
  height: 218px;
  border-radius: 4px;
  background: #abb0ba;
`;
const LegalBar = styled.div`
  flex: none;
  height: 32px;
  line-height: 34px;
  text-align: center;
  letter-spacing: -0.055px;
  color: #000;
  white-space: pre;
  -webkit-text-stroke: 0.15px;
  a { text-underline-offset: 2px; }
`;
const TopBar = styled.header`
  flex: none;
  display: grid;
  grid-template-columns: 492px 432px 1fr;
  align-items: center;
  height: 48px;
  background: #25282f;
  color: #fff;
`;
const Logo = styled.div`
  display: flex;
  align-items: center;
  padding-left: 15px;
`;
const GlobalSearch = styled.div`
  display: flex;
  align-items: center;
  height: 32px;
  border: 1px solid #666a72;
  border-radius: 4px;
  padding: 0 8px 0 7px;
  color: #b4b7bd;
  letter-spacing: -0.03px;
  -webkit-text-stroke: 0.15px;
  svg { margin-right: 10px; color: #fff; }
`;
const Shortcut = styled.span`
  margin-left: auto;
  padding-top: 2px;
  font-size: 11px;
  font-weight: 700;
  color: #fff;
`;
const TopActions = styled.div`
  display: flex;
  align-items: center;
  justify-content: flex-end;
  gap: 23px;
  padding-right: 16px;
`;
const Avatar = styled.span`
  width: 24px;
  height: 24px;
  margin-left: -4px;
  border-radius: ${(p) => (p.$square ? '4px' : '50%')};
  background: ${(p) => p.$color};
  color: #000;
  font-size: 12px;
  font-weight: 500;
  line-height: 24px;
  text-align: center;
  -webkit-text-stroke: 0.2px;
`;
const NavBar = styled.nav`
  position: relative;
  z-index: 2;
  flex: none;
  display: flex;
  align-items: center;
  height: 48px;
  padding: 0 25px 0 20px;
  background: #fff;
  border-bottom: 1px solid #cbd3e2;
  box-shadow: 0 1px 6px rgba(0, 0, 0, 0.12), 0 3px 5px rgba(0, 0, 0, 0.04);
  ${Avatar} { margin: 0 16px 0 20px; }
`;
const Crumbs = styled.div`
  display: flex;
  height: 24px;
  font-size: 12px;
  font-weight: 500;
  line-height: 24px;
  -webkit-text-stroke: 0.15px;
`;
const CRUMB_SHAPES = {
  first: 'polygon(0 0, calc(100% - 7.5px) 0, 100% 50%, calc(100% - 7.5px) 100%, 0 100%)',
  middle: 'polygon(0 0, calc(100% - 7.5px) 0, 100% 50%, calc(100% - 7.5px) 100%, 0 100%, 7.5px 50%)',
  last: 'polygon(0 0, 100% 0, 100% 100%, 0 100%, 7.5px 50%)',
};
const Crumb = styled.span`
  width: ${(p) => p.$w}px;
  margin-right: -3.5px;
  padding-left: ${(p) => (p.$shape === 'first' ? 12 : 15.5)}px;
  clip-path: ${(p) => CRUMB_SHAPES[p.$shape]};
  border-radius: ${(p) => ({ first: '5px 0 0 5px', middle: '0', last: '0 5px 5px 0' }[p.$shape])};
  background: ${(p) => (p.$shape === 'last' ? '#d5d6d8' : '#cce4f5')};
  color: ${(p) => (p.$shape === 'last' ? '#40434c' : '#0061a6')};
`;
const NavActions = styled.div`
  display: flex;
  align-items: center;
  margin-left: auto;
  color: #0071c2;
  font-weight: 500;
  letter-spacing: 0.08px;
  gap: 24px;
  -webkit-text-stroke: 0.3px;
  svg { -webkit-text-stroke: 0; }
`;
const IconLabel = styled.span`
  display: flex;
  align-items: center;
  gap: 8px;
`;
const Body = styled.div`
  flex: 1;
  display: flex;
  min-height: 0;
  overflow: hidden;
`;
const Rail = styled.aside`
  flex: none;
  width: 40px;
  border-right: 8px solid #f8f9fb;
  background: #ebecf0;
  padding: 33px 0 0 4px;
  color: #343741;
`;
const Main = styled.main`
  flex: 1;
  min-width: 0;
  background: #fff;
  box-shadow: 0 0 8px rgba(0, 0, 0, 0.12);
`;
const Filters = styled.section`
  height: 96px;
  padding: 8px;
  background: #fafbfd;
`;
const QueryRow = styled.div`
  display: grid;
  grid-template-columns: 762px 472px 118px;
  gap: 8px;
`;
const Field = styled.div`
  display: flex;
  align-items: center;
  height: 40px;
  border: 1px solid #d0d6e8;
  border-radius: 6px;
  overflow: hidden;
  background: #fbfcfd;
`;
const Addon = styled.span`
  display: flex;
  align-items: center;
  justify-content: center;
  gap: ${(p) => p.$gap || 6}px;
  width: ${(p) => p.$w}px;
  height: 100%;
  background: #e9ebf3;
  color: #0071c2;
  font-size: 12px;
  font-weight: 600;
`;
const FieldText = styled.span`
  flex: 1;
  padding-left: 8px;
  color: ${(p) => (p.$muted ? '#69707d' : '#343741')};
  -webkit-text-stroke: 0.1px;
`;
const UpdateButton = styled.button`
  display: flex;
  align-items: center;
  justify-content: center;
  gap: 8px;
  padding: 0 6px 1px;
  border: 0;
  border-radius: 6px;
  background: #f1f2f6;
  color: #a2abba;
  font: 500 14px Inter, sans-serif;
  letter-spacing: 0.05px;
  -webkit-text-stroke: 0.3px;
`;
const FilterRow = styled.div`
  display: flex;
  align-items: center;
  height: 44px;
  padding-left: 4px;
  color: #0071c2;
  font-weight: 500;
  -webkit-text-stroke: 0.3px;
  svg { margin-bottom: 4px; }
`;
const FilterDash = styled.i`
  width: 10px;
  height: 1px;
  margin: 0 8px 5px 6px;
  background: #d3dae6;
`;
const Content = styled.section`
  padding: 24px;
`;
const Title = styled.h1`
  margin: 0;
  font-size: 34px;
  line-height: 40px;
  font-weight: 700;
  letter-spacing: -0.2px;
  color: #1a1c21;
`;
const LastEvent = styled.p`
  margin: 9px 0 0;
  padding-bottom: 25px;
  border-bottom: 1px solid #d3dae6;
  color: #69707d;
  font-size: 12px;
  line-height: 16px;
  letter-spacing: 0.03px;
  -webkit-text-stroke: 0.12px;
`;
const Panel = styled.section`
  margin-top: 24px;
  height: 435px;
  border: 1px solid #d3dae6;
  border-radius: 6px;
  overflow: hidden;
`;
const PanelHead = styled.div`
  display: flex;
  align-items: center;
  height: 56px;
  padding: 0 20px 0 16px;
`;
const PanelTitle = styled.h2`
  margin: 0;
  flex: 1;
  font-size: 14px;
  font-weight: 700;
  letter-spacing: -0.07px;
`;
const HelpLink = styled.span`
  display: flex;
  align-items: center;
  gap: 5px;
  margin-right: 25px;
  color: #0071c2;
  font-size: 12px;
  font-weight: 500;
  -webkit-text-stroke: 0.25px;
`;
const PanelToggle = styled.span`
  color: #0071c2;
`;
const MapArea = styled.div`
  position: relative;
  height: 378px;
  border: 1px solid #d3dae6;
  border-right-width: 1px;
  border-radius: 5px;
  overflow: hidden;
  background: #e6e6e6;
`;
const ZoomBox = styled.div`
  position: absolute;
  left: 12px;
  top: 12px;
  display: grid;
  place-items: center;
  width: 32px;
  height: 64px;
  border-radius: 5px;
  background: #fff;
  box-shadow: 0 3px 9px rgba(0, 0, 0, 0.1), 0 10px 34px rgba(0, 0, 0, 0.16);
`;
const WarningBox = styled.div`
  position: absolute;
  right: 12px;
  top: 12px;
  display: grid;
  place-items: center;
  width: 32px;
  height: 32px;
  padding-bottom: 2px;
  border-radius: 4px;
  background: #fff;
`;
const MapNotes = styled.div`
  position: absolute;
  right: 12px;
  bottom: 13px;
  display: flex;
  flex-direction: column;
  align-items: flex-end;
  gap: 10px;
  font-size: 10.5px;
  line-height: 16px;
  color: #343741;
`;
const Attribution = styled.div`
  display: flex;
  align-items: center;
  font-weight: 500;
  white-space: pre;
  letter-spacing: -0.01px;
  -webkit-text-stroke: 0.15px;
  svg { margin-left: 5px; }
`;
const Cards = styled.div`
  display: grid;
  grid-template-columns: 316px 316px 656px;
  gap: 24px;
  margin-top: 24px;
`;
const Card = styled.section`
  display: flex;
  align-items: flex-start;
  gap: 6px;
  height: 120px;
  padding: 18px 20px;
  border: 1px solid #d3dae6;
  border-radius: 6px;
  font-size: 12px;
  font-weight: 700;
  color: #1a1c21;
  svg { margin-top: 4px; }
`;
const TimelineBar = styled.footer`
  position: relative;
  z-index: 2;
  flex: none;
  display: flex;
  align-items: center;
  height: 50px;
  padding: 5px 0 0 18px;
  background: #fff;
  box-shadow: 0 -1px 12px rgba(0, 0, 0, 0.07);
  color: #0071c2;
  font-weight: 500;
  letter-spacing: 0.05px;
  -webkit-text-stroke: 0.3px;
  svg { margin-bottom: 1px; }
`;
const Dot = styled.i`
  width: 8px;
  height: 8px;
  margin: 0 8px 0 25px;
  border-radius: 50%;
  background: #b58a0e;
`;

/* ---------- icons ---------- */

const Chevron = ({ s = 14, w = 1.4 }) => (
  <svg width={s} height={s} viewBox="0 0 14 14" fill="none" stroke="currentColor" strokeWidth={w} strokeLinecap="round" strokeLinejoin="round">
    <path d="M1.3 4.3 6.3 9.4a1 1 0 0 0 1.4 0l5-5.1" />
  </svg>
);
const Popout = ({ s = 12 }) => (
  <svg width={s} height={s} viewBox="0 0 12 12" fill="none" stroke="currentColor">
    <path d="M7.5 1H11v3.5M11 1 5 7.2" strokeWidth="1.1" />
    <path d="M5 2.5H1.5a.8.8 0 0 0-.8.8v7.2c0 .4.3.8.8.8h7.2c.5 0 .8-.4.8-.8V7" opacity=".65" />
  </svg>
);
const Ring = ({ s, r, w, track, lead, from }) => (
  <svg width={s} height={s} viewBox={`0 0 ${s} ${s}`} fill="none" strokeWidth={w}>
    <circle cx={s / 2} cy={s / 2} r={r} stroke={track} />
    <circle cx={s / 2} cy={s / 2} r={r} stroke={lead} pathLength="100" strokeDasharray="25 75" transform={`rotate(${from} ${s / 2} ${s / 2})`} />
  </svg>
);
const SearchIcon = () => (
  <svg width="14" height="14" viewBox="0 0 15 15" fill="none" stroke="currentColor" strokeWidth="1.05">
    <circle cx="7" cy="6.8" r="5.3" /><path d="m10.7 10.6 2.8 3" strokeLinecap="round" />
  </svg>
);
const HelpIcon = () => (
  <svg width="16" height="16" viewBox="0 0 16 16" fill="none" stroke="#fff">
    <circle cx="8" cy="8" r="7.4" strokeWidth="1.1" /><circle cx="8" cy="8" r="4.5" strokeWidth="1.1" />
    <path d="m2.4 3.8 2.1 1.8M3.8 2.4l1.8 2.1M13.6 3.8l-2.1 1.8M12.2 2.4l-1.8 2.1M2.4 12.2l2.1-1.8M3.8 13.6l1.8-2.1M13.6 12.2l-2.1-1.8M12.2 13.6l-1.8-2.1" />
  </svg>
);
const CheerIcon = () => (
  <svg width="17" height="16" viewBox="0 0 17 16" fill="none" stroke="#fff" strokeLinecap="round" strokeLinejoin="round">
    <path d="M4.8 4.6.9 14a.8.8 0 0 0 1 1l9.5-3.8M4.8 4.6l6.6 6.6M4.4 6.8l5.3 5M3.2 9.5l3.9 3.6M2.2 12.2l2 1.8" />
    <path d="M5.4 3.3a2 2 0 0 1 3.4.5c.4 1.2 0 2.3-.8 3M9 8.7c1.4-1 2.4-2.6 4.6-2.4M12.6 9.8c1.5-.9 3.1 0 3 1.4-.1.9-.8 1.5-1.6 1.3M6.3.8l.3.3M10.6 2v.5M14.8 1.2h.3M11.8 4.6l1.2-1.2M15.4 4.4v.3M13 1l.2.2" />
  </svg>
);
const MenuIcon = () => (
  <svg width="16" height="12" viewBox="0 0 16 12" fill="#343741"><path d="M0 0h16v2H0zM0 5h16v2H0zM0 10h16v2H0z" /></svg>
);
const IntegrationsIcon = () => (
  <svg width="15" height="15" viewBox="0 0 15 15" fill="none" stroke="currentColor">
    <path d="M6 13.4H1.100V1h10.800v5" strokeWidth="1.3" />
    <path d="M3 4h1M5 4h5.200M3 6.800h1M5 6.800h4M3 9.600h1M5 9.600h1.600" strokeWidth="1.1" />
    <circle cx="10.500" cy="10.300" r="4.400" fill="currentColor" stroke="none" /><path d="M10.500 7.900v4.800M8.100 10.300h4.800" stroke="#fff" strokeWidth="1.2" />
  </svg>
);
const SaveIcon = () => (
  <svg width="14" height="14" viewBox="0 0 14 14" fill="none" stroke="currentColor">
    <path d="M.5.5h10.600l2.400 2.400v10.600H.5z" /><path d="M4 .5v4h5.500v-4M7.600 1.800v1.400" /><circle cx="7" cy="9" r="1.4" />
  </svg>
);
const CalendarIcon = () => (
  <svg width="14" height="15" viewBox="0 0 14 15" fill="none" stroke="currentColor">
    <rect x=".5" y="1.5" width="13" height="13" rx="1.5" /><path d="M.5 4.500h13M4.500 0v3M9.500 0v3" />
    <path d="M3 7.500h8M3 9.500h8M3 11.500h8" strokeDasharray="2 1" />
  </svg>
);
const RailIcon = () => (
  <svg width="16" height="14" viewBox="0 0 16 14" fill="none" stroke="currentColor">
    <path d="M1 2.500h8M1 6.500h13.500M1 10.500h8M11.200 3.100l3.400 3.400-3.400 3.400" strokeLinecap="round" />
  </svg>
);
const FilterIcon = () => (
  <svg width="16" height="16" viewBox="0 0 16 16" fill="none" stroke="currentColor">
    <circle cx="8" cy="8" r="7.4" /><path d="M3 5.5h10M5 8.500h6M7.200 11.500h1.600" />
  </svg>
);
const PlusCircle = () => (
  <svg width="16" height="16" viewBox="0 0 16 16" fill="none" stroke="currentColor">
    <circle cx="8.500" cy="8" r="7" /><path d="M8.500 4v8M4.500 8h8" />
  </svg>
);
const ZoomIcon = ({ plus }) => (
  <svg width="16" height="16" viewBox="0 0 16 16">
    <circle cx="8.300" cy="7.500" r="7.500" fill="#2b2e37" /><path d={plus ? 'M4.300 7.500h8M8.300 3.500v8' : 'M4.300 7.500h8'} stroke="#fff" strokeWidth="1.1" />
  </svg>
);
const WarningIcon = () => (
  <svg width="14" height="13" viewBox="0 0 14 13" fill="none" stroke="#343741">
    <path d="M7 1 .8 12h12.4z" strokeLinejoin="round" /><path d="M7 4.2v4.2M7 9.6v1.3" strokeWidth="1.1" />
  </svg>
);

/* ---------- map ---------- */

const Label = styled.text`
  font: 700 14px "Noto Sans", "Open Sans", sans-serif;
  fill: #4a4a4a;
  stroke: #fff;
  stroke-width: 2.5px;
  stroke-linejoin: round;
  paint-order: stroke;
  text-anchor: middle;
`;
const MapLabel = ({ x, y, w, children }) => (
  <Label x={x} y={y} textLength={w} lengthAdjust="spacingAndGlyphs">{children}</Label>
);

const WorldMap = () => (
  <svg width="1332" height="376" viewBox="0 0 1332 376">
    <defs>
      <clipPath id="land"><path d={landPath} /></clipPath>
      <g id="world">
        <path d={landPath} fill="#c9d2de" transform="translate(-0.9 0.6)" />
        <g transform="translate(0.4 -0.2)">
          <path d={landPath} fill="#fff" />
          <g clipPath="url(#land)" fill="none" strokeLinejoin="round">
            <path d={provincePath} stroke="#cfcfcf" strokeWidth=".8" strokeDasharray="3 .6" />
            <path d={statePath} stroke="#cfcfcf" strokeWidth=".8" strokeDasharray="3 .8" />
            <path d={borderPath} stroke="#b4b4b4" strokeWidth="1" />
          </g>
          <path d={lakePath} fill="#e2e3e5" stroke="#ccd4df" strokeWidth=".6" />
        </g>
      </g>
      <g id="traffic" transform="translate(-66 -421)">
        {PINS.map(([x, y]) => (
          <path
            key={`${x}-${y}`}
            d={`M${x} ${y}c-1.500-4.200-9-10-9-16.200 0-5.400 4-9 9-9s9 3.600 9 9c0 6.200-7.500 12-9 16.200z`}
            fill="#d36086" stroke="#fff" strokeWidth="2.4" paintOrder="stroke"
          />
        ))}
        {FLOWS.map(([x, y, o = 0.48, w = 1.2], i) => (
          <path key={i} d={`M${HUB[0]} ${HUB[1]}L${x} ${y}`} stroke="#6092c0" strokeOpacity={o} strokeWidth={w} />
        ))}
      </g>
    </defs>
    {[-WORLD, 0, WORLD].map((dx) => <use key={dx} href="#world" x={dx} />)}
    <MapLabel x={359} y={61} w={49}>NORTH</MapLabel>
    <MapLabel x={359} y={78} w={62}>AMERICA</MapLabel>
    <MapLabel x={495.5} y={291} w={47}>SOUTH</MapLabel>
    <MapLabel x={495.5} y={308} w={62}>AMERICA</MapLabel>
    <MapLabel x={719.5} y={206} w={49}>AFRICA</MapLabel>
    <MapLabel x={923} y={69} w={32}>ASIA</MapLabel>
    <MapLabel x={39} y={292} w={62}>OCEANIA</MapLabel>
    <MapLabel x={1063} y={292} w={62}>OCEANIA</MapLabel>
    {[-WORLD, 0, WORLD].map((dx) => <use key={dx} href="#traffic" x={dx} />)}
  </svg>
);

export default function App() {
  return (
    <Screen>
      <Global />
      <Page>
        <LegalBar>
          <a href="#trademarks">Trademarks</a> | <a href="#terms">Terms of Use</a> | <a href="#privacy">Privacy</a>
          {' | © 2022. Elasticsearch B.V. All Rights Reserved'}
        </LegalBar>
        <TopBar>
          <Logo>
            <Ring s={26} r={11.6} w={1.7} track="#d3d7df" lead="#0b70c4" from="105" />
            <svg width="80" height="36" viewBox="0 0 80 36">
              <text x="7" y="26" textLength="64" lengthAdjust="spacingAndGlyphs" fill="#fff" fontFamily="Open Sans, Noto Sans, sans-serif" fontWeight="400" fontSize="23">elastic</text>
            </svg>
          </Logo>
          <GlobalSearch>
            <SearchIcon />
            Find apps, content, and more. Ex: Discover
            <Shortcut>⌘/</Shortcut>
          </GlobalSearch>
          <TopActions>
            <HelpIcon />
            <CheerIcon />
            <Avatar $color="#6dccb1">GU</Avatar>
          </TopActions>
        </TopBar>
        <NavBar>
          <MenuIcon />
          <Avatar $square $color="#00bfb3">D</Avatar>
          <Crumbs>
            <Crumb $shape="first" $w={75.5}>Security</Crumb>
            <Crumb $shape="middle" $w={80.5}>Network</Crumb>
            <Crumb $shape="last" $w={61}>Flows</Crumb>
          </Crumbs>
          <NavActions>
            <IconLabel><IntegrationsIcon />Add integrations</IconLabel>
            <IconLabel>Data view<Chevron /></IconLabel>
          </NavActions>
        </NavBar>
        <Body>
          <Rail><RailIcon /></Rail>
          <Main>
            <Filters>
              <QueryRow>
                <Field>
                  <Addon $w={52}><SaveIcon /><Chevron /></Addon>
                  <FieldText $muted>Search</FieldText>
                  <Addon $w={40}>KQL</Addon>
                </Field>
                <Field>
                  <Addon $w={52} $gap={7}><CalendarIcon /><Chevron s={11} w={1.6} /></Addon>
                  <FieldText>Today</FieldText>
                </Field>
                <UpdateButton>
                  <Ring s={16} r={7.3} w={1.2} track="#a9b1c0" lead="#3b9be0" from="150" />
                  Updating
                </UpdateButton>
              </QueryRow>
              <FilterRow>
                <FilterIcon />
                <FilterDash />
                + Add filter
              </FilterRow>
            </Filters>
            <Content>
              <Title>Network</Title>
              <LastEvent>Last event: 1 second ago</LastEvent>
              <Panel>
                <PanelHead>
                  <PanelTitle>Network map</PanelTitle>
                  <HelpLink>Map configuration help <Popout s={11} /></HelpLink>
                  <PanelToggle><Chevron /></PanelToggle>
                </PanelHead>
                <MapArea>
                  <WorldMap />
                  <ZoomBox><ZoomIcon plus /><ZoomIcon /></ZoomBox>
                  <WarningBox><WarningIcon /></WarningBox>
                  <MapNotes>
                    <span><b>zoom:</b> 1</span>
                    <Attribution>
                      Elastic Maps Service<Popout s={11} />{', '}
                      OpenMapTiles<Popout s={11} />{', '}
                      OpenStreetMap contributors<Popout s={11} />
                    </Attribution>
                  </MapNotes>
                </MapArea>
              </Panel>
              <Cards>
                {['Network events', 'DNS queries', 'Unique private IPs'].map((t) => (
                  <Card key={t}><Chevron />{t}</Card>
                ))}
              </Cards>
            </Content>
          </Main>
        </Body>
        <TimelineBar>
          <PlusCircle />
          <Dot />
          Untitled timeline
        </TimelineBar>
      </Page>
      <ScrollTrack><ScrollThumb /></ScrollTrack>
    </Screen>
  );
}
